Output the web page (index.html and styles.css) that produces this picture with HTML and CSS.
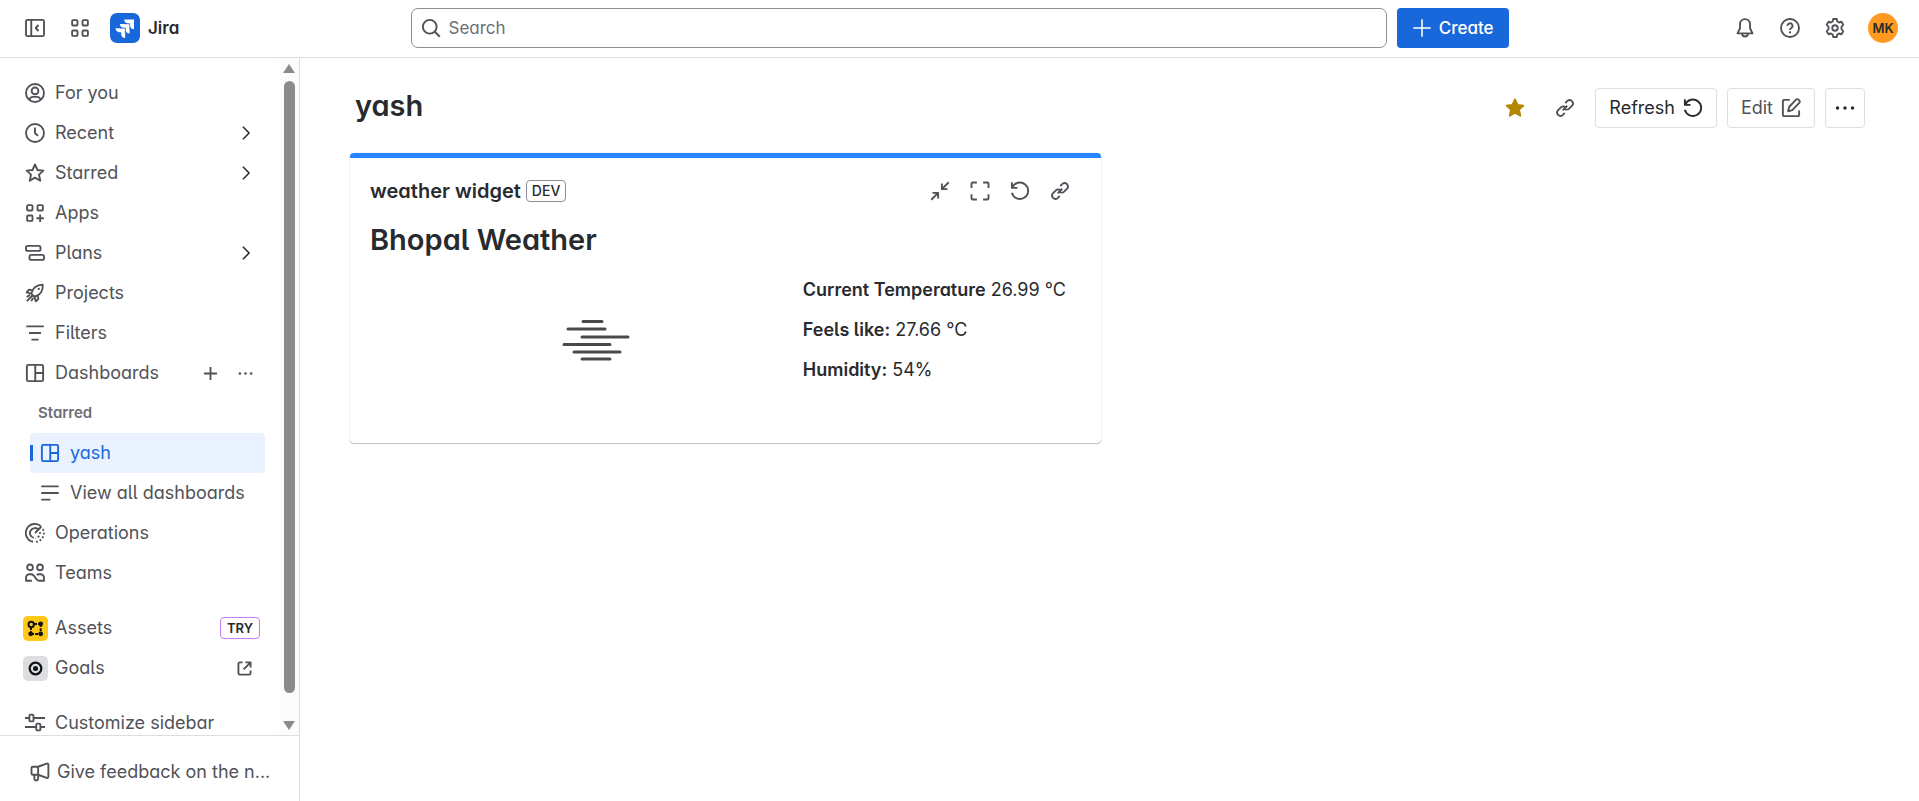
FILE: index.html
```html
<!DOCTYPE html>
<html lang="en">
<head>
  <meta charset="UTF-8" />
  <meta name="viewport" content="width=device-width, initial-scale=1.0" />
  <title>yash - Jira</title>
  <link rel="stylesheet" href="styles.css">
</head>
<body>
  <!-- shared icons, used below through <use> -->
  <svg class="sprite" aria-hidden="true">
    <symbol id="i-link" viewBox="0 0 16 16"><path d="M8.2 4 9.9 2.3a2.7 2.7 0 0 1 3.8 3.8l-2.4 2.4a2.7 2.7 0 0 1-3.8 0M7.8 12l-1.7 1.7a2.7 2.7 0 0 1-3.8-3.8l2.4-2.4a2.7 2.7 0 0 1 3.8 0M6.2 9.8l3.6-3.6"/></symbol>
    <symbol id="i-refresh" viewBox="0 0 16 16"><path d="M1.5 1v4.5H6M1.8 5.3A6.6 6.6 0 1 1 1.5 9.4"/></symbol>
    <symbol id="i-dashboard" viewBox="0 0 16 16"><rect x="1.5" y="1.5" width="13" height="13" rx="1.2"/><path d="M8.2 1.5v13M8.2 8h6.3"/></symbol>
    <symbol id="i-chevron" viewBox="0 0 16 16"><path d="m5.5 3 5 5-5 5"/></symbol>
    <symbol id="i-more" viewBox="0 0 16 16"><g fill="currentColor" stroke="none"><circle cx="2" cy="8" r="1.4"/><circle cx="8" cy="8" r="1.4"/><circle cx="14" cy="8" r="1.4"/></g></symbol>
    <symbol id="i-plus" viewBox="0 0 16 16"><path d="M8 1v14M1 8h14"/></symbol>
  </svg>

  <header class="topbar">
    <div class="topbar-left">
      <button class="icon-btn" aria-label="Collapse sidebar"><svg class="icon" viewBox="0 0 16 16"><rect x=".8" y="1.5" width="14.4" height="13" rx="1.2"/><path d="M5 1.5v13M10.8 5.6 8.6 8l2.2 2.4"/></svg></button>
      <button class="icon-btn" aria-label="Switch sites or apps"><svg class="icon" viewBox="0 0 16 16"><rect x="1.7" y="1.7" width="4.3" height="4.3" rx=".8"/><rect x="10" y="1.7" width="4.3" height="4.3" rx=".8"/><rect x="1.7" y="10" width="4.3" height="4.3" rx=".8"/><rect x="10" y="10" width="4.3" height="4.3" rx=".8"/></svg></button>
      <a class="logo" href="#">
        <svg class="logo-mark" viewBox="0 0 30 30"><rect width="30" height="30" rx="7" fill="#1868db"/><g fill="#fff"><path d="M14.2 6.5H24v9.7c-2.4 0-4-1.6-4-3.8v-2h-2c-2.3 0-3.8-1.6-3.8-3.9z"/><path d="M9.9 10.9h9.7v9.7c-2.4 0-4-1.6-4-3.8v-2h-1.9c-2.3 0-3.8-1.6-3.8-3.9z"/><path d="M5.5 15.3h9.7V25c-2.4 0-4-1.6-4-3.8v-2H9.4c-2.3 0-3.9-1.6-3.9-3.9z"/></g><path d="M14 10.9h5.6v5.3M9.7 15.3h5.5v5.2" fill="none" stroke="#1868db" stroke-width=".5"/></svg>
        <span>Jira</span>
      </a>
    </div>
    <div class="topbar-center">
      <label class="search">
        <svg class="icon" viewBox="0 0 16 16"><circle cx="7" cy="7" r="5.5"/><path d="m11 11 4 4"/></svg>
        <input type="text" placeholder="Search" aria-label="Search">
      </label>
      <button class="create"><svg class="icon thin"><use href="#i-plus"/></svg>Create</button>
    </div>
    <div class="topbar-right">
      <button class="icon-btn" aria-label="Notifications"><svg class="icon" viewBox="0 0 16 16"><path d="M8 .9a4 4 0 0 0-4 3.8v3.5L2 12.3h12l-2-4.1V4.7A4 4 0 0 0 8 .9zM5.7 12.5a2.3 2.3 0 0 0 4.6 0"/></svg></button>
      <button class="icon-btn" aria-label="Help"><svg class="icon" viewBox="0 0 16 16"><circle cx="8" cy="8" r="7.2"/><path d="M6 6.3a2 2 0 1 1 3 1.7c-.7.4-1 .8-1 1.5"/><circle cx="8" cy="11.5" r=".9" fill="currentColor" stroke="none"/></svg></button>
      <button class="icon-btn" aria-label="Settings"><svg class="icon" viewBox="0 0 16 16"><path d="M6.600.8h2.800l.5 2 1.300.8 2-.6 1.400 2.400L13.200 7v2l1.400 1.600-1.400 2.400-2-.6-1.300.8-.5 2H6.600l-.5-2-1.300-.8-2 .6-1.400-2.400L2.800 9V7L1.400 5.400 2.800 3l2 .6 1.300-.8z"/><circle cx="8" cy="8" r="2.2"/></svg></button>
      <button class="avatar" aria-label="Profile">MK</button>
    </div>
  </header>

  <div class="layout">
    <aside class="sidebar">
      <div class="sidebar-scroll">
        <nav class="nav">
          <a class="nav-item" href="#"><span class="nav-icon"><svg class="icon" viewBox="0 0 16 16"><circle cx="8" cy="8" r="7.2"/><circle cx="8" cy="6.3" r="2.7"/><path d="M3.5 13.4c.4-1.5 1.5-2.3 2.8-2.3h3.4c1.3 0 2.4.8 2.8 2.3"/></svg></span>For you</a>
          <a class="nav-item" href="#"><span class="nav-icon"><svg class="icon" viewBox="0 0 16 16"><circle cx="8" cy="8" r="7.2"/><path d="M8 3.5v4.7l2.5 2"/></svg></span>Recent<svg class="icon thin chevron"><use href="#i-chevron"/></svg></a>
          <a class="nav-item" href="#"><span class="nav-icon"><svg class="icon" viewBox="0 0 16 16"><path d="m8 1.2 2 4.4 4.7.5-3.5 3.2 1 4.9L8 11.7l-4.2 2.5 1-4.9L1.3 6.1 6 5.6z"/></svg></span>Starred<svg class="icon thin chevron"><use href="#i-chevron"/></svg></a>
          <a class="nav-item" href="#"><span class="nav-icon"><svg class="icon" viewBox="0 0 16 16"><rect x="1.7" y="1.7" width="4.3" height="4.3" rx=".8"/><rect x="10" y="1.7" width="4.3" height="4.3" rx=".8"/><rect x="1.7" y="10" width="4.3" height="4.3" rx=".8"/><path d="M12.1 9.2v6M9.1 12.2h6"/></svg></span>Apps</a>
          <a class="nav-item" href="#"><span class="nav-icon"><svg class="icon" viewBox="0 0 16 16"><rect x=".8" y="2.3" width="11.6" height="4" rx="1.4"/><rect x="3.6" y="9.5" width="11.6" height="4" rx="1.4"/></svg></span>Plans<svg class="icon thin chevron"><use href="#i-chevron"/></svg></a>
          <a class="nav-item" href="#"><span class="nav-icon"><svg class="icon" viewBox="0 0 16 16"><path d="M5 8.5C6 4.5 8.5 1.5 14.2 1.3c.3 5.5-2.5 8.700-6.700 9.700M6 6 3.200 5.300 1.300 7.500 5 8.500l2.500 2.500 1.200 3.700 2-2-.6-2.800M1.300 11.200 4 9.500M1.500 14.500l4.300-4.300M5 14.500l1.500-2.600"/><circle cx="11" cy="4.700" r=".9" fill="currentColor" stroke="none"/></svg></span>Projects</a>
          <a class="nav-item" href="#"><span class="nav-icon"><svg class="icon" viewBox="0 0 16 16"><path d="M1 2.7h14M3.2 8h9.6M5.2 13.3h5.6"/></svg></span>Filters</a>
          <div class="nav-row">
            <a class="nav-item" href="#"><span class="nav-icon"><svg class="icon"><use href="#i-dashboard"/></svg></span>Dashboards</a>
            <button class="mini-btn" aria-label="Create dashboard"><svg class="icon small"><use href="#i-plus"/></svg></button>
            <button class="mini-btn" aria-label="More actions"><svg class="icon small"><use href="#i-more"/></svg></button>
          </div>
          <div class="subnav">
            <h2 class="subnav-title">Starred</h2>
            <a class="nav-item selected" href="#"><span class="nav-icon"><svg class="icon"><use href="#i-dashboard"/></svg></span>yash</a>
            <a class="nav-item" href="#"><span class="nav-icon"><svg class="icon" viewBox="0 0 16 16"><path d="M1 2.7h14M1 8h14M1 13.3h7.3"/></svg></span>View all dashboards</a>
          </div>
          <a class="nav-item" href="#"><span class="nav-icon"><svg class="icon" viewBox="0 0 16 16"><path d="M13 2.9A7.2 7.2 0 1 0 6.500 15M10.800 5.200A4 4 0 1 0 7 11.900M8 8l5-5"/><path d="M14.300 4.800a7.200 7.200 0 0 1-6 10.400M11.900 7.300A4 4 0 0 1 8.500 12" stroke-dasharray="1.5 1.5"/></svg></span>Operations</a>
          <a class="nav-item" href="#"><span class="nav-icon"><svg class="icon" viewBox="0 0 16 16"><circle cx="4" cy="3.5" r="2.3"/><circle cx="12" cy="3.5" r="2.3"/><path d="M5.500 14.200H.8v-2.400A2.800 2.800 0 0 1 3.600 9h1.200c1.200 0 2 .6 2.700 1.600l1.500 2.200c.6.900 1.300 1.400 2.300 1.400h3.900v-2.400A2.800 2.800 0 0 0 12.400 9h-1.200c-.7 0-1.300.2-1.800.6"/></svg></span>Teams</a>

          <div class="nav-section">
            <a class="nav-item" href="#"><span class="nav-icon"><svg class="tile" viewBox="0 0 25 25"><rect width="25" height="25" rx="5" fill="#ffc716"/><g fill="none" stroke="#101214" stroke-width="2"><circle cx="8.2" cy="8.5" r="2.7"/><path d="M8 11v7M8 18h9.7M17.7 8v10M11 8h6" stroke-dasharray="3 1.2"/></g><g fill="#101214"><circle cx="17.7" cy="7.8" r="2.4"/><circle cx="7.7" cy="17.8" r="2.4"/><circle cx="17.7" cy="17.8" r="2.4"/></g></svg></span>Assets<span class="try">TRY</span></a>
            <a class="nav-item" href="#"><span class="nav-icon"><svg class="tile" viewBox="0 0 25 25"><rect width="25" height="25" rx="5" fill="#dddee1"/><circle cx="12.5" cy="12.5" r="5.8" fill="none" stroke="#101214" stroke-width="2.2"/><circle cx="12.5" cy="12.5" r="2.5" fill="#101214"/></svg></span>Goals<svg class="icon small external" viewBox="0 0 16 16"><path d="M6 1.5H3A1.5 1.5 0 0 0 1.5 3v10A1.5 1.5 0 0 0 3 14.5h10a1.5 1.5 0 0 0 1.5-1.5v-3M9 1.5h5.5V7M14.300 1.700 7 9"/></svg></a>
          </div>
          <div class="nav-section">
            <a class="nav-item" href="#"><span class="nav-icon"><svg class="icon" viewBox="0 0 16 16"><path d="M0 4h3.300M7 4h9M0 11.200h8.800M12.500 11.200H16"/><rect x="3.5" y="1.3" width="3.3" height="5.4" rx="1"/><rect x="9" y="8.5" width="3.3" height="5.4" rx="1"/></svg></span>Customize sidebar</a>
          </div>
        </nav>
        <div class="scrollbar" aria-hidden="true"><i class="arrow up"></i><i class="thumb"></i><i class="arrow down"></i></div>
      </div>
      <div class="sidebar-footer">
        <button class="feedback"><svg class="icon" viewBox="0 0 16 16"><path d="M6.500 3.800H2.200a1 1 0 0 0-1 1v4.400a1 1 0 0 0 1 1h4.300zM6.500 3.800l6.800-2.500a1 1 0 0 1 1.400 1v9.400a1 1 0 0 1-1.400 1L6.500 10.200M3.500 10.400v2.800c0 .9.600 1.500 1.500 1.500s1.500-.6 1.500-1.500v-3"/></svg>Give feedback on the n...</button>
      </div>
    </aside>

    <main class="page">
      <div class="page-head">
        <h1>yash</h1>
        <div class="actions">
          <button class="icon-btn star" aria-label="Unstar dashboard"><svg class="icon" viewBox="0 0 16 16"><path d="m8 1.2 2 4.4 4.7.5-3.5 3.2 1 4.9L8 11.7l-4.2 2.5 1-4.9L1.3 6.1 6 5.6z" fill="currentColor"/></svg></button>
          <button class="icon-btn" aria-label="Copy link"><svg class="icon"><use href="#i-link"/></svg></button>
          <button class="btn dark">Refresh<svg class="icon"><use href="#i-refresh"/></svg></button>
          <button class="btn">Edit<svg class="icon" viewBox="0 0 16 16"><path d="M7 1.500H2.500a1 1 0 0 0-1 1v11a1 1 0 0 0 1 1h11a1 1 0 0 0 1-1V10M12 1.300a1.400 1.400 0 0 1 2 0l.6.600a1.400 1.400 0 0 1 0 2L9 9.700l-3.300.9.800-3.400z"/></svg></button>
          <button class="btn square dark" aria-label="More"><svg class="icon"><use href="#i-more"/></svg></button>
        </div>
      </div>

      <div class="gadgets">
        <section class="card">
          <div class="card-head">
            <h2>weather widget</h2>
            <span class="lozenge">DEV</span>
            <div class="card-tools">
              <button class="tool" aria-label="Minimize"><svg class="icon" viewBox="0 0 16 16"><path d="M15 1 9.500 6.500M9.500 2v4.500H14M1 15l5.500-5.500M2 9.500h4.500V14"/></svg></button>
              <button class="tool" aria-label="Maximize"><svg class="icon" viewBox="0 0 16 16"><path d="M1.200 5.500V2.200a1 1 0 0 1 1-1h3.300M10.500 1.200h3.300a1 1 0 0 1 1 1v3.300M14.800 10.500v3.300a1 1 0 0 1-1 1h-3.300M5.500 14.800H2.200a1 1 0 0 1-1-1v-3.300"/></svg></button>
              <button class="tool" aria-label="Refresh gadget"><svg class="icon"><use href="#i-refresh"/></svg></button>
              <button class="tool" aria-label="Copy gadget link"><svg class="icon"><use href="#i-link"/></svg></button>
            </div>
          </div>
          <h3>Bhopal Weather</h3>
          <div class="weather">
            <svg class="mist" viewBox="0 0 68 42" role="img" aria-label="Mist"><path d="M21 2.500h19M6 10h37M20 18h46M2 25.500h46M12 33h46M20 40h28"/></svg>
            <div class="readings">
              <p><strong>Current Temperature</strong> 26.99 °C</p>
              <p><strong>Feels like:</strong> 27.66 °C</p>
              <p><strong>Humidity:</strong> 54%</p>
            </div>
          </div>
        </section>
      </div>
    </main>
  </div>
</body>
</html>
```
FILE: styles.css
```css
* {
  box-sizing: border-box;
}
body {
  margin: 0;
  height: 100vh;
  display: flex;
  flex-direction: column;
  font-family: Inter, "Liberation Sans", sans-serif;
  font-feature-settings: "cv05", "cv11";
  font-size: 18px;
  line-height: 24px;
  color: #292a2e;
  background: #fff;
}
h1, h2, h3, p {
  margin: 0;
}
a {
  color: inherit;
  text-decoration: none;
}
button, input {
  font: inherit;
  font-feature-settings: inherit;
  color: inherit;
}
button {
  padding: 0;
  border: 0;
  background: none;
  cursor: pointer;
}
.sprite {
  position: absolute;
  width: 0;
  height: 0;
}
.icon {
  width: 20px;
  height: 20px;
  flex: none;
  fill: none;
  stroke: currentColor;
  stroke-width: 1.5;
  stroke-linejoin: round;
}
.icon.small {
  width: 15px;
  height: 15px;
  stroke-width: 2;
}
.icon.thin {
  stroke-width: 1.25;
}
.icon-btn {
  width: 40px;
  height: 40px;
  display: grid;
  place-items: center;
  color: #505258;
}

/* top bar */
.topbar {
  flex: none;
  display: grid;
  grid-template-columns: 1fr minmax(auto, 1098px) 1fr;
  align-items: center;
  padding: 8px 20px 9px;
  border-bottom: 1px solid #dddee1;
  font-size: 17px;
}
.topbar-left, .topbar-center, .topbar-right {
  display: flex;
  align-items: center;
}
.topbar-left, .topbar-right {
  gap: 5px;
}
.topbar-left {
  margin-left: -5px;
}
.topbar-center {
  gap: 10px;
}
.topbar-right {
  justify-content: flex-end;
}
.logo {
  display: flex;
  align-items: center;
  gap: 8px;
  margin-left: 5px;
  font-weight: 600;
}
.logo-mark {
  width: 30px;
  height: 30px;
}
.search {
  flex: 1;
  height: 40px;
  display: flex;
  align-items: center;
  gap: 8px;
  padding: 0 9px;
  border: 1px solid #8c8f97;
  border-radius: 7px;
  color: #505258;
}
.search input {
  flex: 1;
  min-width: 0;
  padding: 0;
  border: 0;
  outline: 0;
  background: none;
}
.search input::placeholder {
  color: #6b6e76;
}
.create {
  height: 40px;
  display: flex;
  align-items: center;
  gap: 7px;
  padding: 0 15px;
  border-radius: 4px;
  background: #1868db;
  color: #fff;
  font-weight: 500;
}
.avatar {
  width: 30px;
  height: 30px;
  margin: 0 1px 0 8px;
  border-radius: 50%;
  background: #ff991f;
  color: #292a2e;
  font-size: 13px;
  font-weight: 600;
}

/* sidebar */
.layout {
  flex: 1;
  min-height: 0;
  display: flex;
}
.sidebar {
  width: 300px;
  flex: none;
  display: flex;
  flex-direction: column;
  border-right: 1px solid #dddee1;
  color: #505258;
}
.sidebar-scroll {
  flex: 1;
  min-height: 0;
  display: flex;
  overflow: hidden;
}
.nav {
  flex: 1;
  min-width: 0;
  padding: 15px 14px 0 15px;
}
.nav-item {
  height: 40px;
  display: flex;
  align-items: center;
  gap: 5px;
  padding: 0 9px 0 5px;
  border-radius: 4px;
  white-space: nowrap;
}
.nav-icon {
  width: 30px;
  display: flex;
  justify-content: center;
}
.tile {
  width: 25px;
  height: 25px;
}
.chevron, .external, .try {
  margin-left: auto;
}
.chevron {
  color: #292a2e;
}
.external {
  margin-right: 4px;
}
.try {
  padding: 0 6px;
  border: 1px solid #c97cf4;
  border-radius: 4px;
  font-size: 13px;
  line-height: 20px;
  font-weight: 600;
  color: #292a2e;
  margin-right: -4px;
}
.nav-row {
  display: flex;
  align-items: center;
}
.nav-row .nav-item {
  flex: 1;
}
.mini-btn {
  width: 30px;
  height: 30px;
  margin-right: 5px;
  display: grid;
  place-items: center;
}
.subnav {
  padding-left: 15px;
}
.subnav-title {
  padding-left: 8px;
  font-size: 15px;
  line-height: 40px;
  font-weight: 600;
  color: #6b6e76;
}
.selected {
  position: relative;
  background: #e9f2fe;
  color: #1868db;
}
.selected::before {
  content: '';
  position: absolute;
  left: 0;
  top: 12px;
  width: 3px;
  height: 16px;
  background: #1868db;
}
.nav-section {
  margin-top: 15px;
}
.scrollbar {
  width: 20px;
  flex: none;
  display: flex;
  flex-direction: column;
  align-items: center;
  padding: 6px 0 5px;
  background: #fcfcfc;
}
.thumb {
  flex: 1;
  width: 11px;
  margin: 8px 0 28px;
  border-radius: 6px;
  background: #8b8b8b;
}
.arrow {
  border: 6px solid transparent;
}
.arrow.up {
  border-top: 0;
  border-bottom: 9px solid #8b8b8b;
}
.arrow.down {
  border-bottom: 0;
  border-top: 9px solid #8b8b8b;
}
.sidebar-footer {
  flex: none;
  padding: 16px 20px 9px 30px;
  border-top: 1px solid #dddee1;
}
.feedback {
  height: 40px;
  display: flex;
  align-items: center;
  gap: 7px;
  white-space: nowrap;
}

/* dashboard */
.page {
  flex: 1;
  min-width: 0;
  padding: 30px 50px;
}
.page-head {
  display: flex;
  align-items: flex-start;
  justify-content: space-between;
  padding: 0 4px 0 5px;
  margin-bottom: 25px;
}
h1, h3 {
  font-size: 29px;
  line-height: 36px;
  font-weight: 600;
}
.actions {
  display: flex;
  gap: 10px;
}
.star {
  color: #b38600;
}
.btn {
  height: 40px;
  display: flex;
  align-items: center;
  gap: 8px;
  padding: 0 13px;
  border: 1px solid #dddee1;
  border-radius: 4px;
  color: #505258;
}
.btn.dark {
  color: #292a2e;
}
.btn.square {
  padding: 0 9px;
}
.gadgets {
  display: grid;
  grid-template-columns: 1fr 1fr;
  gap: 18px;
}
.card {
  min-height: 290px;
  padding: 17px 21px 17px 20px;
  border-top: 5px solid #2684ff;
  border-radius: 4px;
  box-shadow: 0 1px 1px rgba(9, 30, 66, 0.25), 0 0 1px rgba(9, 30, 66, 0.31);
}
.card-head {
  display: flex;
  align-items: center;
  gap: 5px;
}
.card-head h2 {
  font-size: 20px;
  font-weight: 600;
}
.lozenge {
  padding: 0 5px;
  border: 1px solid #8c8f97;
  border-radius: 4px;
  font-size: 14px;
  line-height: 20px;
  font-weight: 500;
}
.card-tools {
  display: flex;
  margin-left: auto;
}
.tool {
  width: 40px;
  height: 32px;
  display: grid;
  place-items: center;
  color: #505258;
}
.card h3 {
  margin-top: 15px;
}
.weather {
  display: grid;
  grid-template-columns: 61fr 39fr;
  align-items: end;
  margin-top: 20px;
}
.mist {
  width: 68px;
  height: 42px;
  justify-self: center;
  margin: 0 0 21px 20px;
  fill: none;
  stroke: #4a4a4a;
  stroke-width: 3;
  stroke-linecap: round;
}
.readings {
  display: grid;
  gap: 16px;
}
.readings strong {
  font-weight: 600;
}
```
